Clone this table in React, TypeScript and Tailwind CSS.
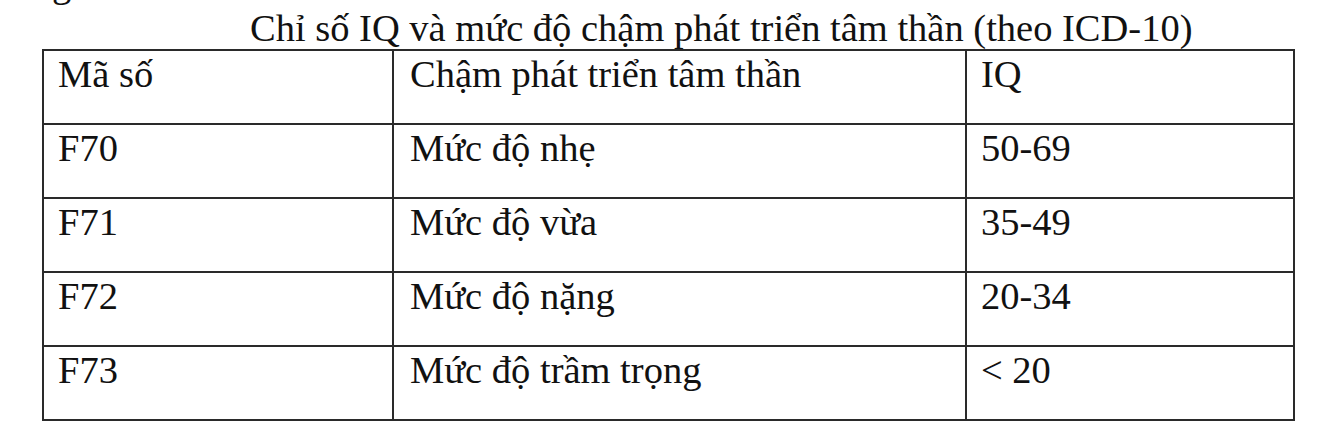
const rows = [
  { code: "Mã số", name: "Chậm phát triển tâm thần", iq: "IQ" },
  { code: "F70", name: "Mức độ nhẹ", iq: "50-69" },
  { code: "F71", name: "Mức độ vừa", iq: "35-49" },
  { code: "F72", name: "Mức độ nặng", iq: "20-34" },
  { code: "F73", name: "Mức độ trầm trọng", iq: "< 20" },
];

export default function App() {
  return (
    <div
      className="w-[1317px] h-[425px] overflow-hidden bg-white text-[#111] text-[38.5px] leading-[44px]"
      style={{ fontFamily: '"Liberation Serif", "Times New Roman", serif' }}
    >
      {/* cut-off line above */}
      <div className="h-[6px] overflow-hidden">
        <div className="-mt-[38px] pl-[52px]">g</div>
      </div>

      <div className="pl-[250px] h-[43px] whitespace-nowrap">
        Chỉ số IQ và mức độ chậm phát triển tâm thần (theo ICD-10)
      </div>

      <table className="ml-[42px] border-collapse table-fixed w-[1251px]">
        <colgroup>
          <col className="w-[350px]" />
          <col className="w-[573px]" />
          <col className="w-[328px]" />
        </colgroup>
        <tbody>
          {rows.map((r) => (
            <tr key={r.code} className="h-[74px]">
              <td className="border-2 border-[#2a2a2a] align-top pt-[1px] pl-[14px]">{r.code}</td>
              <td className="border-2 border-[#2a2a2a] align-top pt-[1px] pl-[16px]">{r.name}</td>
              <td className="border-2 border-[#2a2a2a] align-top pt-[1px] pl-[14px]">{r.iq}</td>
            </tr>
          ))}
        </tbody>
      </table>

      {/* cut-off line below */}
      <div className="pl-[447px] pt-[1px]">ố</div>
    </div>
  );
}
